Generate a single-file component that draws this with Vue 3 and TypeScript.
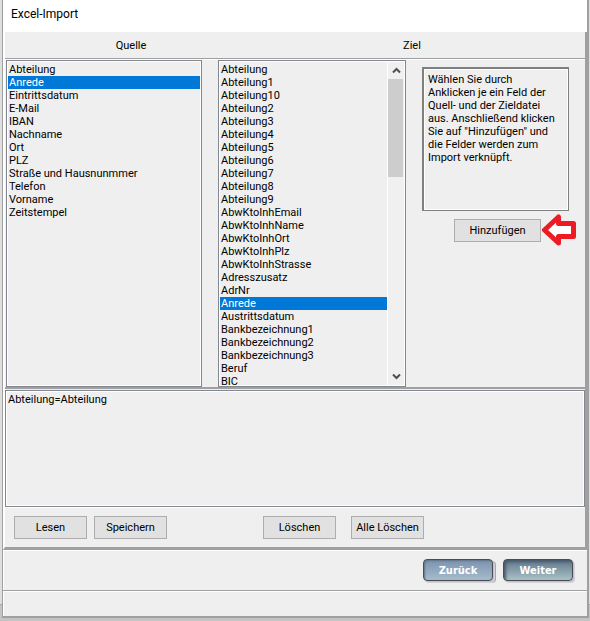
<script setup lang="ts">
import { onMounted, ref } from 'vue'

const sourceFields: string[] = [
  'Abteilung', 'Anrede', 'Eintrittsdatum', 'E-Mail', 'IBAN', 'Nachname', 'Ort', 'PLZ',
  'Straße und Hausnunmmer', 'Telefon', 'Vorname', 'Zeitstempel',
]

const targetFields: string[] = [
  'Abteilung', 'Abteilung1', 'Abteilung10', 'Abteilung2', 'Abteilung3', 'Abteilung4',
  'Abteilung5', 'Abteilung6', 'Abteilung7', 'Abteilung8', 'Abteilung9', 'AbwKtoInhEmail',
  'AbwKtoInhName', 'AbwKtoInhOrt', 'AbwKtoInhPlz', 'AbwKtoInhStrasse', 'Adresszusatz',
  'AdrNr', 'Anrede', 'Austrittsdatum', 'Bankbezeichnung1', 'Bankbezeichnung2',
  'Bankbezeichnung3', 'Beruf', 'BIC',
]

const source = ref<string>('Anrede')
const target = ref<string>('Anrede')
const links = ref<string[]>(['Abteilung=Abteilung'])
const activeLink = ref<string>('')
const targetList = ref<HTMLSelectElement | null>(null)

function addLink(): void {
  const entry = `${source.value}=${target.value}`
  if (!links.value.includes(entry)) links.value.push(entry)
}

function removeLink(): void {
  links.value = links.value.filter((entry) => entry !== activeLink.value)
}

function scrollTarget(rows: number): void {
  targetList.value?.scrollBy({ top: rows * 13 })
}

onMounted(() => {
  if (targetList.value) targetList.value.scrollTop = 0
})
</script>

<template>
  <div class="desktop">
    <main class="window">
      <h1 class="title">Excel-Import</h1>
      <div class="body">
        <div class="headings">
          <label for="source">Quelle</label>
          <label for="target">Ziel</label>
        </div>

        <section class="mapping">
          <div class="frame">
            <select id="source" v-model="source" class="list" size="25">
              <option v-for="field in sourceFields" :key="field" :value="field">{{ field }}</option>
            </select>
          </div>

          <div class="frame">
            <select id="target" ref="targetList" v-model="target" class="list" size="25">
              <option v-for="field in targetFields" :key="field" :value="field">{{ field }}</option>
            </select>
            <div class="scrollbar">
              <button type="button" class="step" aria-label="Nach oben" @click="scrollTarget(-1)">
                <svg viewBox="0 0 9 7" width="9" height="7"><path d="M1 5.5 4.5 2 8 5.5" /></svg>
              </button>
              <div class="track"><div class="thumb"></div></div>
              <button type="button" class="step" aria-label="Nach unten" @click="scrollTarget(1)">
                <svg viewBox="0 0 9 7" width="9" height="7"><path d="M1 1.5 4.5 5 8 1.5" /></svg>
              </button>
            </div>
          </div>

          <div class="side">
            <p class="hint">
              Wählen Sie durch<br />Anklicken je ein Feld der<br />Quell- und der Zieldatei<br />aus. Anschließend klicken<br />Sie auf "Hinzufügen" und<br />die Felder werden zum<br />Import verknüpft.
            </p>
            <div class="add">
              <button type="button" class="button wide" @click="addLink">Hinzufügen</button>
              <svg class="arrow" viewBox="0 0 35 32" width="35" height="32" aria-hidden="true">
                <path d="M3.500 16 17.500 3V9.500H32.500V22.500H17.500V29Z" />
              </svg>
            </div>
          </div>
        </section>

        <div class="frame result">
          <select v-model="activeLink" class="list" size="8" aria-label="Verknüpfungen">
            <option v-for="entry in links" :key="entry" :value="entry">{{ entry }}</option>
          </select>
        </div>

        <div class="actions">
          <div class="group near">
            <button type="button" class="button">Lesen</button>
            <button type="button" class="button">Speichern</button>
          </div>
          <div class="group">
            <button type="button" class="button" @click="removeLink">Löschen</button>
            <button type="button" class="button" @click="links = []">Alle Löschen</button>
          </div>
        </div>
      </div>

      <nav class="wizard">
        <button type="button" class="nav back">Zurück</button>
        <button type="button" class="nav next">Weiter</button>
      </nav>
      <footer class="status"></footer>
    </main>
  </div>
</template>

<style>
body {
  background: #d9d9d9;
}
</style>

<style scoped>
.desktop {
  box-sizing: border-box;
  min-height: 100vh;
  display: flex;
  padding: 0 1px 3px 2px;
  background: linear-gradient(to top, #c4c4c4 16px, #a8a8a8 16px, #a8a8a8 17px, #dedede 17px);
  font-family: Roboto, "Liberation Sans", sans-serif;
  font-size: 11px;
  line-height: 13px;
  color: #000;
}

.window {
  flex: 1;
  min-width: 0;
  display: flex;
  flex-direction: column;
  background: #efefef;
  border: solid #a0a0a0;
  border-width: 0 2px 2px 1px;
  box-shadow: inset 1px 0 0 #fff;
}

.title {
  margin: 0;
  padding: 6px 8px 10px;
  background: #fff;
  font: 400 12px/16px Roboto, "Noto Sans", sans-serif;
}

.body {
  flex: 1;
  display: flex;
  flex-direction: column;
  border: solid;
  border-color: #fff #a0a0a0 #a0a0a0 #fff;
  border-width: 0 2px 3px 2px;
}

.headings {
  display: grid;
  grid-template-columns: 252fr 310fr;
  padding: 7px 18px 6px 0;
  border-bottom: 1px solid #a0a0a0;
  text-align: center;
}

.mapping {
  display: grid;
  grid-template-columns: 196fr 188fr 163fr;
  column-gap: 16px;
  padding: 0 0 0 1px;
  border-top: 1px solid #fff;
  border-bottom: 2px solid #a0a0a0;
}

.frame {
  display: flex;
  min-width: 0;
  padding: 1px;
  border: 1px solid #828790;
  box-shadow: inset 0 0 0 1px #fff;
}

.list {
  flex: 1;
  min-width: 0;
  margin: 0;
  padding: 1px 0 0;
  border: 0;
  border-radius: 0;
  outline: 0;
  background: #efefef;
  color: #000;
  font: inherit;
  scrollbar-width: none;
}

.mapping .list {
  height: 323px;
}

.list option {
  min-height: 13px;
  height: 13px;
  padding: 0 1px;
  line-height: 13px;
  color: #000;
}

.list option:checked {
  background: #0078d7 linear-gradient(#0078d7, #0078d7);
  color: #fff;
}

.scrollbar {
  width: 16px;
  display: flex;
  flex-direction: column;
  border-left: 1px solid #fff;
  background: #f0f0f0;
}

.step {
  height: 17px;
  padding: 0;
  border: 0;
  background: none;
  line-height: 0;
}

.step path {
  fill: none;
  stroke: #505050;
  stroke-width: 2;
}

.track {
  flex: 1;
}

.thumb {
  height: 34%;
  margin-right: 1px;
  background: #cdcdcd;
}

.side {
  padding: 7px 16px 0 0;
}

.hint {
  box-sizing: border-box;
  min-height: 144px;
  margin: 0;
  padding: 4px;
  border: solid #808080;
  border-width: 2px 1px 1px 2px;
  box-shadow: inset 0 0 0 1px #fff;
  white-space: nowrap;
}

.add {
  position: relative;
  width: 87px;
  margin: 8px 0 0 32px;
}

.arrow {
  position: absolute;
  left: 87px;
  top: -5px;
}

.arrow path {
  fill: #fff;
  stroke: #ed1c24;
  stroke-width: 5;
  stroke-linejoin: round;
}

.button {
  width: 73px;
  height: 23px;
  padding: 0;
  border: 1px solid #adadad;
  border-radius: 0;
  background: #e1e1e1;
  color: #000;
  font: inherit;
  white-space: nowrap;
}

.button.wide {
  width: 87px;
}

.result {
  flex: 1;
  margin-top: 1px;
  min-height: 113px;
}

.actions {
  display: flex;
  gap: 96px;
  padding: 8px 9px;
  border-top: 1px solid #fff;
}

.group {
  display: flex;
  gap: 15px;
}

.group.near {
  gap: 7px;
}

.wizard {
  display: flex;
  justify-content: flex-end;
  gap: 10px;
  padding: 8px 14px 9px;
  border-top: 1px solid #fff;
  border-bottom: 1px solid #a0a0a0;
}

.nav {
  width: 70px;
  height: 22px;
  padding: 0;
  border: 1px solid #4a4c50;
  border-radius: 4px;
  color: #fff;
  font: 700 11px/13px "DejaVu Sans Condensed", "DejaVu Sans", Verdana, sans-serif;
}

.nav.back {
  background: linear-gradient(#7c93b0, #a4bccb);
  box-shadow: inset 1px 1px 2px #5f7288, 1px 1px 0 #c4c0cc, 2px 2px 0 #d4d2da, 3px 2px 0 #a8a8a8;
}

.nav.next {
  background: linear-gradient(#60778a, #a9c2c6);
  box-shadow: inset 2px 2px 3px #4a5a6a, 1px 1px 0 #c4c0cc, 2px 2px 0 #d4d2da;
}

.status {
  height: 24px;
  border-top: 1px solid #fff;
}
</style>
